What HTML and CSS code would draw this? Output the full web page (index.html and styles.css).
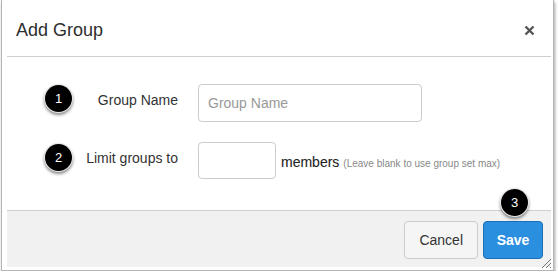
FILE: index.html
```html
<!DOCTYPE html>
<html>
<head>
    <meta charset="UTF-8">
    <title>Add Group</title>
    <link rel="stylesheet" href="styles.css">
</head>
<body>
    <div class="dialog">
        <div class="dialog-header">
            <span class="dialog-title">Add Group</span>
            <svg class="close" width="11" height="11" viewBox="0 0 11 11">
                <path d="M1.5 1.5 L9.5 9.5 M9.5 1.5 L1.5 9.5" stroke="#555" stroke-width="2.4"/>
            </svg>
        </div>

        <form class="dialog-body">
            <div class="form-row">
                <label class="form-label">Group Name</label>
                <input type="text" class="input-name" placeholder="Group Name">
            </div>
            <div class="form-row">
                <label class="form-label">Limit groups to</label>
                <input type="text" class="input-limit">
                <span class="members">members</span>
                <span class="hint">(Leave blank to use group set max)</span>
            </div>
        </form>

        <div class="dialog-footer">
            <button class="btn">Cancel</button>
            <button class="btn btn-primary">Save</button>
            <svg class="grip" width="12" height="12" viewBox="0 0 12 12">
                <path d="M11 2 L2 11 M11 6 L6 11 M11 10 L10 11" stroke="#777" stroke-width="1"/>
            </svg>
        </div>

        <!-- annotation badges -->
        <span class="badge badge-1">1</span>
        <span class="badge badge-2">2</span>
        <span class="badge badge-3">3</span>
    </div>
</body>
</html>
```

FILE: styles.css
```css
body {
    margin: 0;
    background-color: #fff;
    font-family: "Liberation Sans", Arial, sans-serif;
    color: #333;
}
.dialog {
    position: relative;
    margin-left: 1px;
    width: 544px;
    padding: 0 2px 3px 5px;
    border: 1px solid #b5b5b5;
    border-top: none;
    background-color: #fff;
    box-shadow: 1px 2px 3px rgba(0,0,0,0.35);
}
.dialog-header {
    height: 52px;
    padding: 4px 16px 0 9px;
    display: flex;
    align-items: center;
    justify-content: space-between;
    border-bottom: 1px solid #d0d0d0;
}
.dialog-title {
    font-size: 18px;
    color: #2d2d2d;
}
.close {
    display: block;
}
.dialog-body {
    margin: 0;
    padding: 27px 0 31px 0;
    display: flex;
    flex-direction: column;
    gap: 20px;
}
.form-row {
    display: flex;
    align-items: center;
}
.form-label {
    width: 171px;
    margin-right: 20px;
    margin-bottom: 6px;
    text-align: right;
    font-size: 14px;
    color: #333;
}
input {
    box-sizing: border-box;
    border: 1px solid #c7cdd1;
    border-radius: 4px;
    padding: 0 9px;
    font-family: "Liberation Sans", Arial, sans-serif;
    font-size: 14px;
    color: #333;
    background-color: #fff;
}
input::placeholder {
    color: #999;
}
.input-name {
    width: 224px;
    height: 38px;
}
.input-limit {
    width: 78px;
    height: 37px;
}
.members {
    margin-left: 5px;
    margin-top: 3px;
    font-size: 14px;
    color: #222;
    -webkit-text-stroke: 0.1px #222;
}
.hint {
    margin-left: 4px;
    margin-top: 5px;
    font-size: 10px;
    color: #888;
}
.dialog-footer {
    position: relative;
    height: 56px;
    padding-right: 8px;
    display: flex;
    align-items: center;
    justify-content: flex-end;
    gap: 5px;
    border-top: 1px solid #cfcfcf;
    background-color: #f1f1f1;
}
.btn {
    height: 38px;
    padding: 0 14px;
    border: 1px solid #c7cdd1;
    border-radius: 4px;
    background-color: #f5f5f5;
    font-family: "Liberation Sans", Arial, sans-serif;
    font-size: 14px;
    color: #333;
    margin-top: 1px;
}
.btn-primary {
    width: 60px;
    padding: 0;
    border-color: #1b6fb5;
    background-color: #2b8fe0;
    color: #fff;
    font-weight: bold;
}
.grip {
    position: absolute;
    right: -1px;
    bottom: -2px;
}
.badge {
    position: absolute;
    width: 27px;
    height: 27px;
    border-radius: 50%;
    background-color: #000;
    color: #fff;
    font-size: 13px;
    line-height: 27px;
    text-align: center;
    box-shadow: 0 0 0 1px #e8e8e8, 0 2px 3px 1px rgba(0,0,0,0.45);
}
.badge-1 {
    left: 43px;
    top: 85px;
}
.badge-2 {
    left: 43px;
    top: 144px;
}
.badge-3 {
    left: 499px;
    top: 189px;
}
```
